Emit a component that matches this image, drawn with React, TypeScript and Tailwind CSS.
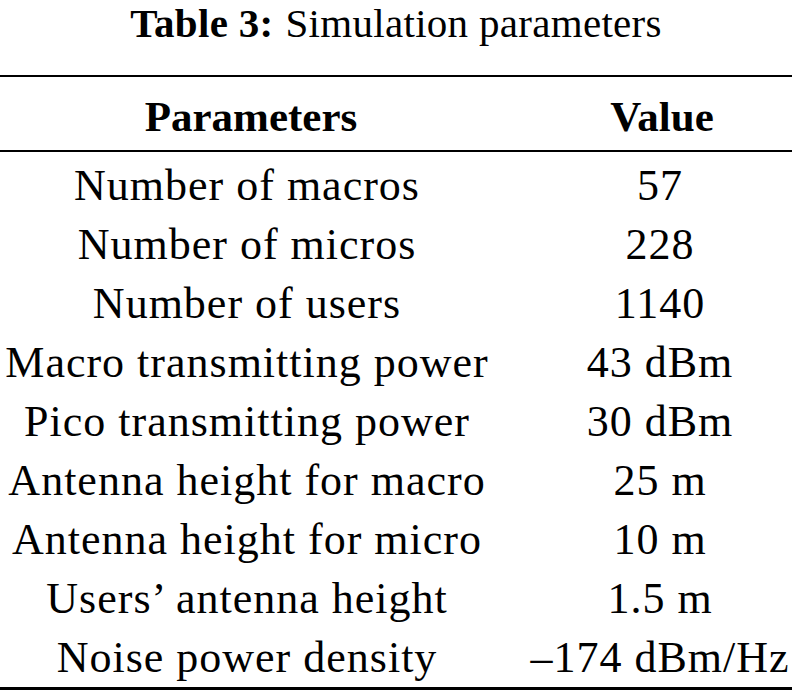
const rows: [string, string][] = [
  ["Number of macros", "57"],
  ["Number of micros", "228"],
  ["Number of users", "1140"],
  ["Macro transmitting power", "43 dBm"],
  ["Pico transmitting power", "30 dBm"],
  ["Antenna height for macro", "25 m"],
  ["Antenna height for micro", "10 m"],
  ["Users’ antenna height", "1.5 m"],
  ["Noise power density", "\u2013174 dBm/Hz"],
];

const App = () => {
  return (
    <div className="w-[792px] h-[692px] bg-white text-black font-['Liberation_Serif',serif] overflow-hidden">
      <h1 className="text-center text-[41px] leading-[46px] tracking-[0.3px]">
        <span className="font-bold">Table 3:</span>
        <span className="ml-3">Simulation parameters</span>
      </h1>
      <div className="mt-[29px] border-t-2 border-black" />
      <div className="grid grid-cols-[494px_1fr] text-[43px] font-bold pt-[6px] leading-[67px] border-b-2 border-black">
        <div className="text-center pl-[8px]">Parameters</div>
        <div className="text-center pl-[38px]">Value</div>
      </div>
      <div className="grid grid-cols-[494px_1fr] text-[44px] tracking-[1px] leading-[59px] pt-[4px] border-b-[3px] border-black">
        {rows.map(([p, v], i) => (
          <div key={i} className="contents">
            <div className="text-center whitespace-nowrap">{p}</div>
            <div className="text-center whitespace-nowrap pl-[34px]">{v}</div>
          </div>
        ))}
      </div>
    </div>
  );
};

export default App;
